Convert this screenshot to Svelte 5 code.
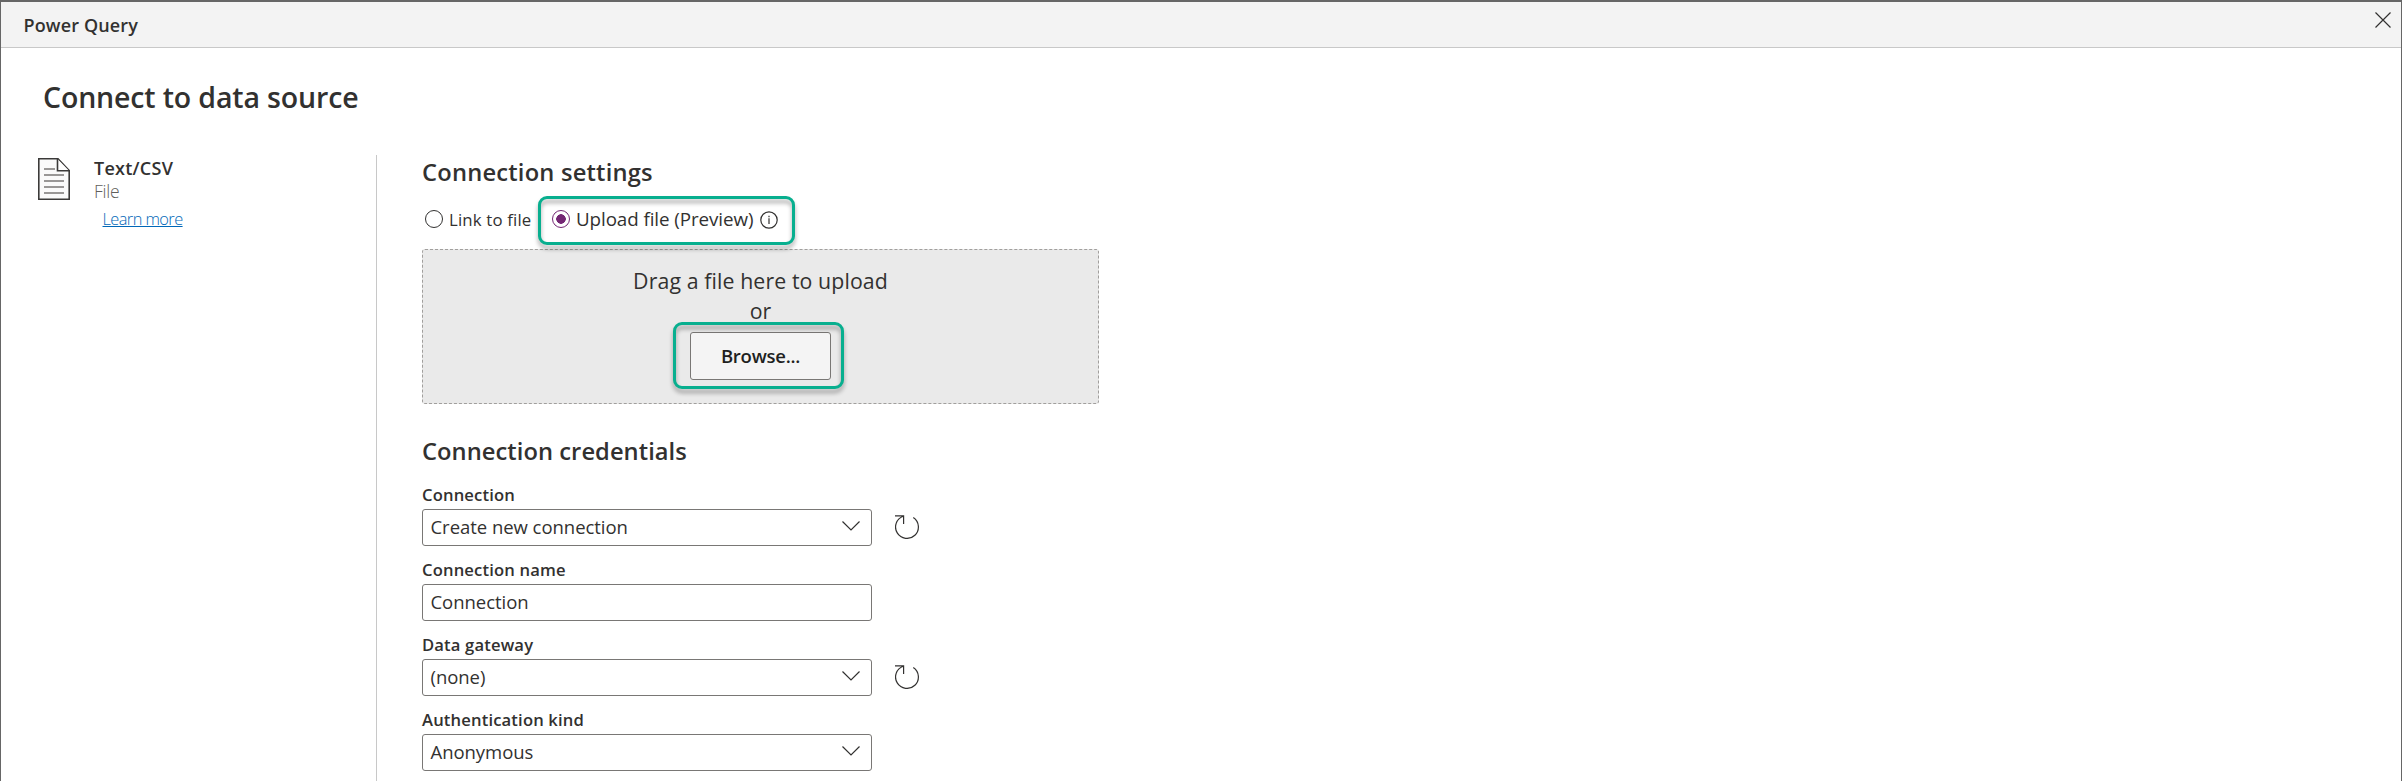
<script>
  const fields = [
    { label: 'Connection', value: 'Create new connection', select: true, refresh: true },
    { label: 'Connection name', value: 'Connection', select: false, refresh: false },
    { label: 'Data gateway', value: '(none)', select: true, refresh: true },
    { label: 'Authentication kind', value: 'Anonymous', select: true, refresh: false }
  ];
</script>

<div class="dialog">
  <header>
    <span class="app">Power Query</span>
    <svg class="close" width="16" height="16" viewBox="0 0 16 16"><path d="M.5.5l15 15M15.500.5l-15 15" /></svg>
  </header>
  <main>
    <h1>Connect to data source</h1>
    <div class="columns">
      <aside>
        <svg class="file" width="32" height="42" viewBox="0 0 32 42">
          <path d="M.8.8H20L31.200 12.500V41.200H.8Z" fill="#fafafa" stroke="#3b3a39" stroke-width="1.600" />
          <path d="M19.500 1V12.700H31" fill="#fff" stroke="#3b3a39" stroke-width="1.600" />
          <path d="M6 11H17M6 17H26M6 23H26M6 29H26M6 35H26" stroke="#797775" stroke-width="1.600" />
        </svg>
        <div class="source">
          <div class="name">Text/CSV</div>
          <div class="kind">File</div>
          <div class="learn">Learn more</div>
        </div>
      </aside>
      <section>
        <h2>Connection settings</h2>
        <div class="radios">
          <div class="radio"><i></i><span>Link to file</span></div>
          <div class="radio upload on"><i></i><span>Upload file (Preview)</span>
            <svg width="18" height="18" viewBox="0 0 18 18"><circle cx="9" cy="9" r="8.200" /><path d="M9 7.300V13M9 4.800V6.200" /></svg>
            <b class="callout"></b>
          </div>
        </div>
        <div class="drop">
          <div class="line">Drag a file here to upload</div>
          <div class="line">or</div>
          <div class="browse"><button>Browse...</button><b class="callout"></b></div>
        </div>
        <h2 class="second">Connection credentials</h2>
        {#each fields as f}
          <div class="field">
            <div class="label">{f.label}</div>
            <div class="control">
              <div class="box"><span>{f.value}</span>
                {#if f.select}<svg width="18" height="10" viewBox="0 0 18 10"><path d="M.5.5L9 9L17.500.5" /></svg>{/if}
              </div>
              {#if f.refresh}<svg class="refresh" width="24" height="24" viewBox="0 0 24 24"><path d="M18.300 2.500A11.400 11.400 0 1 1 8.300 1.200M0 .8H8.600V9" /></svg>{/if}
            </div>
          </div>
        {/each}
      </section>
    </div>
  </main>
</div>

<style>
  .dialog { box-sizing: border-box; width: 2402px; height: 781px; overflow: hidden; border: solid #666; border-width: 2px 1px 0; background: #fff; color: #323130; font-family: "Open Sans", "Noto Sans", sans-serif; }
  header { display: flex; justify-content: space-between; height: 45px; border-bottom: 1px solid #c8c8c8; background: #f3f3f3; padding: 0 10px 0 22px; }
  .app { font-size: 18px; font-weight: 600; line-height: 46px; letter-spacing: .15px; padding-left: .5px; }
  svg { fill: none; stroke: #323130; stroke-width: 1.2; flex: none; }
  .close { margin-top: 10px; }
  main { padding-top: 29px; }
  h1, h2 { margin: 0; font-weight: 600; }
  h1 { padding-left: 42px; font-size: 28.5px; line-height: 40px; letter-spacing: -.15px; }
  .columns { display: flex; margin-top: 38px; height: 640px; }
  aside { box-sizing: border-box; display: flex; width: 376px; padding-left: 37px; border-right: 1px solid #c8c8c8; }
  .file { margin-top: 3px; }
  .source { margin: 1px 0 0 24px; }
  .name { font-size: 18px; line-height: 24px; font-weight: 600; letter-spacing: .25px; }
  .kind { font-size: 17.5px; line-height: 22px; font-weight: 300; color: #605e5c; letter-spacing: -.2px; }
  .learn { font-size: 16.400px; line-height: 34px; font-weight: 300; color: #0067b8; padding-left: 8.500px; letter-spacing: -.58px; text-decoration: underline; text-decoration-thickness: 1px; }
  section { padding: 1px 0 0 45px; }
  h2 { font-size: 23.7px; line-height: 32px; letter-spacing: .21px; }
  .radios { display: flex; align-items: center; height: 36px; margin-top: 13px; padding-left: 3px; }
  .radio { display: flex; align-items: center; height: 26px; font-size: 16.800px; letter-spacing: .16px; }
  .radio i { box-sizing: border-box; width: 18px; height: 18px; border: 1px solid #323130; border-radius: 50%; margin-right: 6px; }
  .upload { position: relative; font-size: 18.800px; letter-spacing: -.08px; margin-left: 20.600px; }
  .upload span { margin-top: -1px; }
  .on i { border-color: #742774; background: radial-gradient(circle, #742774 4.500px, transparent 5px); }
  .radio svg { margin: 2px 0 0 7px; }
  .callout { position: absolute; box-sizing: border-box; border: 3px solid #08af8f; border-radius: 9px; filter: drop-shadow(0 4px 2px rgba(0,0,0,.35)); pointer-events: none; }
  .upload .callout { left: -14px; top: -10px; width: 257px; height: 49px; }
  .drop { box-sizing: border-box; width: 677px; height: 155px; margin-top: 12px; padding-top: 16px; border: 1px dashed #a19f9d; border-radius: 3px; background: #eaeaea; text-align: center; }
  .line { font-size: 21.300px; line-height: 30px; letter-spacing: .1px; }
  .browse { position: relative; width: 141px; margin: 6px auto 0; }
  button { display: block; width: 141px; height: 48px; padding: 0 0 2px; border: 1px solid #797775; border-radius: 3px; background: #f4f4f4; color: #201f1e; font: 600 18.5px "Open Sans", sans-serif; letter-spacing: -.25px; }
  .browse .callout { left: -17px; top: -10px; width: 171px; height: 67px; }
  .second { margin: 31px 0 16px; letter-spacing: .06px; }
  .field { height: 75px; }
  .label { font-size: 16.600px; line-height: 24px; font-weight: 600; margin-bottom: 2px; letter-spacing: .16px; }
  .control { display: flex; align-items: center; }
  .box { box-sizing: border-box; display: flex; justify-content: space-between; align-items: center; width: 450px; height: 37px; border: 1px solid #797775; border-radius: 3px; padding: 0 11px 2px 7.500px; font-size: 18.500px; letter-spacing: -.04px; }
  .box svg { margin-bottom: 2px; }
  .refresh { margin: 0 0 1px 23px; }
</style>
